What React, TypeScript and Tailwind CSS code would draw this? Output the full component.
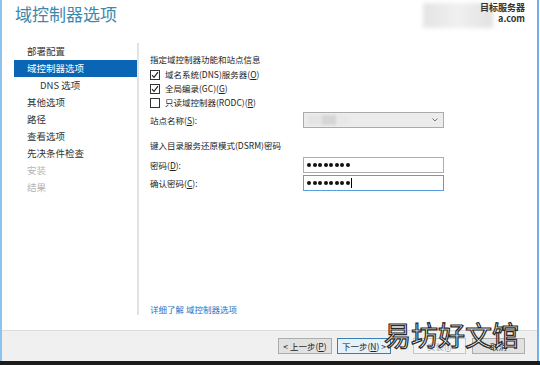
import React from "react";

const font = { fontFamily: '"Noto Sans CJK SC", "Noto Sans", sans-serif' };

function Check({ checked }: { checked: boolean }) {
  return (
    <div className="w-[10px] h-[10px] border border-[#333] bg-white flex items-center justify-center shrink-0">
      {checked && (
        <svg width="8" height="8" viewBox="0 0 8 8">
          <path d="M1 4.2 L3 6.3 L7 1.2" fill="none" stroke="#222" strokeWidth="1.2" />
        </svg>
      )}
    </div>
  );
}

function Dots() {
  return (
    <div className="flex items-center gap-[1.5px]">
      {Array.from({ length: 8 }).map((_, i) => (
        <span key={i} className="w-[4px] h-[4px] rounded-full bg-[#111]" />
      ))}
    </div>
  );
}

const navItems: { t: string; sel?: boolean; sub?: boolean; dis?: boolean }[] = [
  { t: "部署配置" },
  { t: "域控制器选项", sel: true },
  { t: "DNS 选项", sub: true },
  { t: "其他选项" },
  { t: "路径" },
  { t: "查看选项" },
  { t: "先决条件检查" },
  { t: "安装", dis: true },
  { t: "结果", dis: true },
];

export default function App() {
  return (
    <div className="w-[540px] h-[365px] bg-white relative overflow-hidden" style={font}>
      <div className="flex flex-col h-[361px] border-l-2 border-[#8cc2ee] mr-[1px] border-r-2 border-r-[#6fb0e8]">
        {/* Header */}
        <div className="h-[43px] flex justify-between relative">
          <div className="pl-[13px] pt-[1px] text-[17px] leading-[26px] text-[#3e88ae]">域控制器选项</div>
          <div className="absolute left-[421px] top-[3px] w-[70px] h-[25px] bg-gradient-to-r from-[#e4e4e4] via-[#f0f0f0] to-[#e2e2e2] blur-[2px]" />
          <div className="pr-[12px] pt-[2px] flex flex-col items-end text-[9px] leading-[11px] font-bold text-[#333] relative">
            <span>目标服务器</span>
            <span>a.com</span>
          </div>
        </div>
        {/* Body */}
        <div className="flex flex-1">
          <div className="w-[135px] flex flex-col pt-0">
            {navItems.map((n) => (
              <div
                key={n.t}
                className={
                  "h-[17px] flex items-center text-[9.5px] ml-[12px] " +
                  (n.sel ? "bg-[#0a66b5] text-white " : "") +
                  (n.dis ? "text-[#b4b4b4] " : n.sel ? "" : "text-[#333] ") +
                  (n.sub ? "pl-[26px]" : "pl-[13px]")
                }
              >
                {n.t}
              </div>
            ))}
          </div>
          <div className="w-[2px] bg-[#e3e3e3] h-[272px] ml-[0px]" />
          <div className="flex-1 pl-[11px] pt-[9px] text-[8.5px] text-[#222] flex flex-col">
            <div className="h-[14px] flex items-center">指定域控制器功能和站点信息</div>
            <div className="mt-[3px] flex flex-col gap-[3px]">
              <div className="h-[11px] flex items-center gap-[5px]">
                <Check checked />
                <span>域名系统(DNS)服务器(<u>O</u>)</span>
              </div>
              <div className="h-[11px] flex items-center gap-[5px]">
                <Check checked />
                <span>全局编录(GC)(<u>G</u>)</span>
              </div>
              <div className="h-[11px] flex items-center gap-[5px]">
                <Check checked={false} />
                <span>只读域控制器(RODC)(<u>R</u>)</span>
              </div>
            </div>
            <div className="mt-[4px] flex items-center h-[16px]">
              <span className="w-[153px]">站点名称(<u>S</u>):</span>
              <div className="w-[141px] h-[16px] border border-[#acacac] bg-[#ececec] flex items-center justify-between pr-[5px] relative">
                <div className="ml-[4px] flex h-[10px] blur-[1px]">
                  <div className="w-[14px] bg-[#e4e4e4]" />
                  <div className="w-[14px] bg-[#d6d6d6]" />
                  <div className="w-[14px] bg-[#e8e8e8]" />
                </div>
                <svg width="6" height="4" viewBox="0 0 6 4">
                  <path d="M0.5 0.5 L3 3 L5.5 0.5" fill="none" stroke="#777" strokeWidth="1" />
                </svg>
              </div>
            </div>
            <div className="mt-[10px] h-[14px] flex items-center">键入目录服务还原模式(DSRM)密码</div>
            <div className="mt-[5px] flex items-center h-[16px]">
              <span className="w-[153px]">密码(<u>D</u>):</span>
              <div className="w-[141px] h-[16px] border border-[#abadb3] bg-white flex items-center pl-[3px]">
                <Dots />
              </div>
            </div>
            <div className="mt-[2px] flex items-center h-[16px]">
              <span className="w-[153px]">确认密码(<u>C</u>):</span>
              <div className="w-[141px] h-[16px] border border-[#5a9ee0] bg-white flex items-center pl-[3px]">
                <Dots />
                <span className="ml-[1px] w-[1px] h-[10px] bg-black" />
              </div>
            </div>
            <div className="flex-1" />
            <div className="mb-[15px] text-[#2a6fc0] h-[12px] flex items-center">详细了解 域控制器选项</div>
          </div>
        </div>
        {/* Footer */}
        <div className="h-[31px] bg-[#f0f0f0] border-t border-[#dcdcdc] flex items-center justify-end pr-[12px] text-[8.5px]">
          <div className="flex items-center">
            <button className="w-[54px] h-[16px] border border-[#adadad] bg-[#e1e1e1] text-[#222] flex items-center justify-center">
              &lt; 上一步(<u>P</u>)
            </button>
            <button className="ml-[5px] w-[54px] h-[16px] border border-[#3c7fb1] bg-[#e5f1fb] text-[#222] flex items-center justify-center">
              下一步(<u>N</u>) &gt;
            </button>
            <button className="ml-[22px] w-[53px] h-[16px] border border-[#c6c6c6] bg-[#f4f4f4] text-[#a8a8a8] flex items-center justify-center">
              安装(<u>I</u>)
            </button>
            <button className="ml-[6px] w-[53px] h-[16px] border border-[#adadad] bg-[#e1e1e1] text-[#222] flex items-center justify-center">
              取消
            </button>
          </div>
        </div>
      </div>
      <div className="h-[4px] bg-[#1c1c1c]" />
      {/* Watermark */}
      <div className="absolute left-[384px] top-[318px] text-[27px] leading-[34px] text-white [-webkit-text-stroke:1.2px_#2a2a2a] tracking-[0px]">
        易坊好文馆
      </div>
    </div>
  );
}
